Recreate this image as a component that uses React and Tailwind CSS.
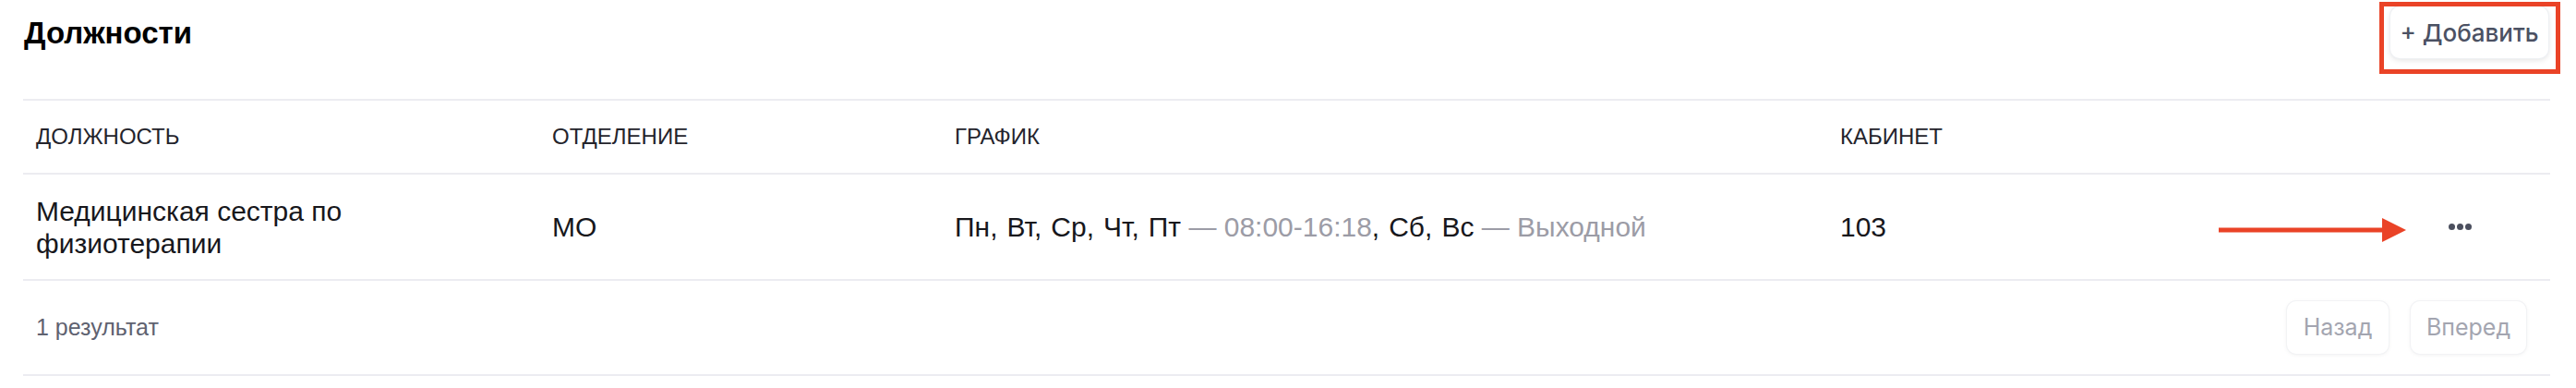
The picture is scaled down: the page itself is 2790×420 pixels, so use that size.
import React from 'react';

const days1 = ['Пн', 'Вт', 'Ср', 'Чт', 'Пт'];
const days2 = ['Сб', 'Вс'];

const DayList = ({ items }) => (
  <>
    {items.map((d, i) => (
      <span key={d}>
        {d}
        {i < items.length - 1 && <span className="mr-[10px]">,</span>}
      </span>
    ))}
  </>
);

const App = () => {
  return (
    <div className="relative w-[2790px] h-[420px] bg-white pl-[25px] pr-[28px] font-['Liberation_Sans',Arial,sans-serif]">
      {/* Header */}
      <div className="flex items-center justify-between h-[70px]">
        <h1 className="text-[33px] font-bold text-black pl-[1px] leading-none">Должности</h1>
        <button className="h-[56px] w-[171px] mr-[2px] rounded-[10px] bg-white shadow-[0_2px_6px_rgba(0,0,0,0.12)] ring-1 ring-[#eef0f3] text-[26px] text-[#4b5163] font-['Inter',sans-serif] font-medium">
          + Добавить
        </button>
      </div>

      {/* Red annotation box */}
      <div className="absolute left-[2577px] top-[2px] w-[196px] h-[78px] border-[5px] border-[#ea4327] pointer-events-none" />

      {/* Table */}
      <div className="mt-[37px] border-t-2 border-[#ececf1]">
        <div className="grid grid-cols-[559px_436px_959px_1fr_120px] h-[80px] items-center text-[24px] text-[#24242c] uppercase border-b-2 border-[#ececf1]">
          <div className="pl-[14px]">Должность</div>
          <div className="pl-[14px]">Отделение</div>
          <div className="pl-[14px]">График</div>
          <div className="pl-[14px]">Кабинет</div>
          <div />
        </div>

        <div className="grid grid-cols-[559px_436px_959px_1fr_120px] h-[115px] items-center text-[30px] text-[#17171c] border-b-2 border-[#ececf1]">
          <div className="pl-[14px] leading-[35px] w-[440px]">Медицинская сестра по физиотерапии</div>
          <div className="pl-[14px]">МО</div>
          <div className="pl-[14px]">
            <DayList items={days1} />
            <span className="text-[#9c9ca6]"> — 08:00-16:18</span>
            <span className="mr-[10px]">,</span>
            <DayList items={days2} />
            <span className="text-[#9c9ca6]"> — Выходной</span>
          </div>
          <div className="pl-[14px]">103</div>
          <div className="flex items-center gap-[2px] pl-[10px]">
            <span className="w-[7px] h-[7px] rounded-full bg-[#4b4f5e]" />
            <span className="w-[7px] h-[7px] rounded-full bg-[#4b4f5e]" />
            <span className="w-[7px] h-[7px] rounded-full bg-[#4b4f5e]" />
          </div>
        </div>

        {/* Footer */}
        <div className="flex items-center justify-between h-[103px] border-b-2 border-[#ececf1] pl-[14px] pr-[26px]">
          <span className="text-[25px] text-[#5f6270]">1 результат</span>
          <div className="flex gap-[24px] font-['Inter',sans-serif] text-[25px] text-[#a3a5b0]">
            <button className="h-[57px] w-[110px] rounded-[10px] bg-white shadow-[0_1px_5px_rgba(0,0,0,0.07)] ring-1 ring-[#f2f3f5]">Назад</button>
            <button className="h-[57px] w-[125px] rounded-[10px] bg-white shadow-[0_1px_5px_rgba(0,0,0,0.07)] ring-1 ring-[#f2f3f5]">Вперед</button>
          </div>
        </div>
      </div>

      {/* Red annotation arrow */}
      <svg className="absolute left-[2403px] top-[235px] pointer-events-none" width="204" height="28" viewBox="0 0 204 28">
        <rect x="0" y="11.5" width="180" height="5" fill="#ea4327" />
        <polygon points="177,1 203,14 177,27" fill="#ea4327" />
      </svg>
    </div>
  );
};

export default App;
